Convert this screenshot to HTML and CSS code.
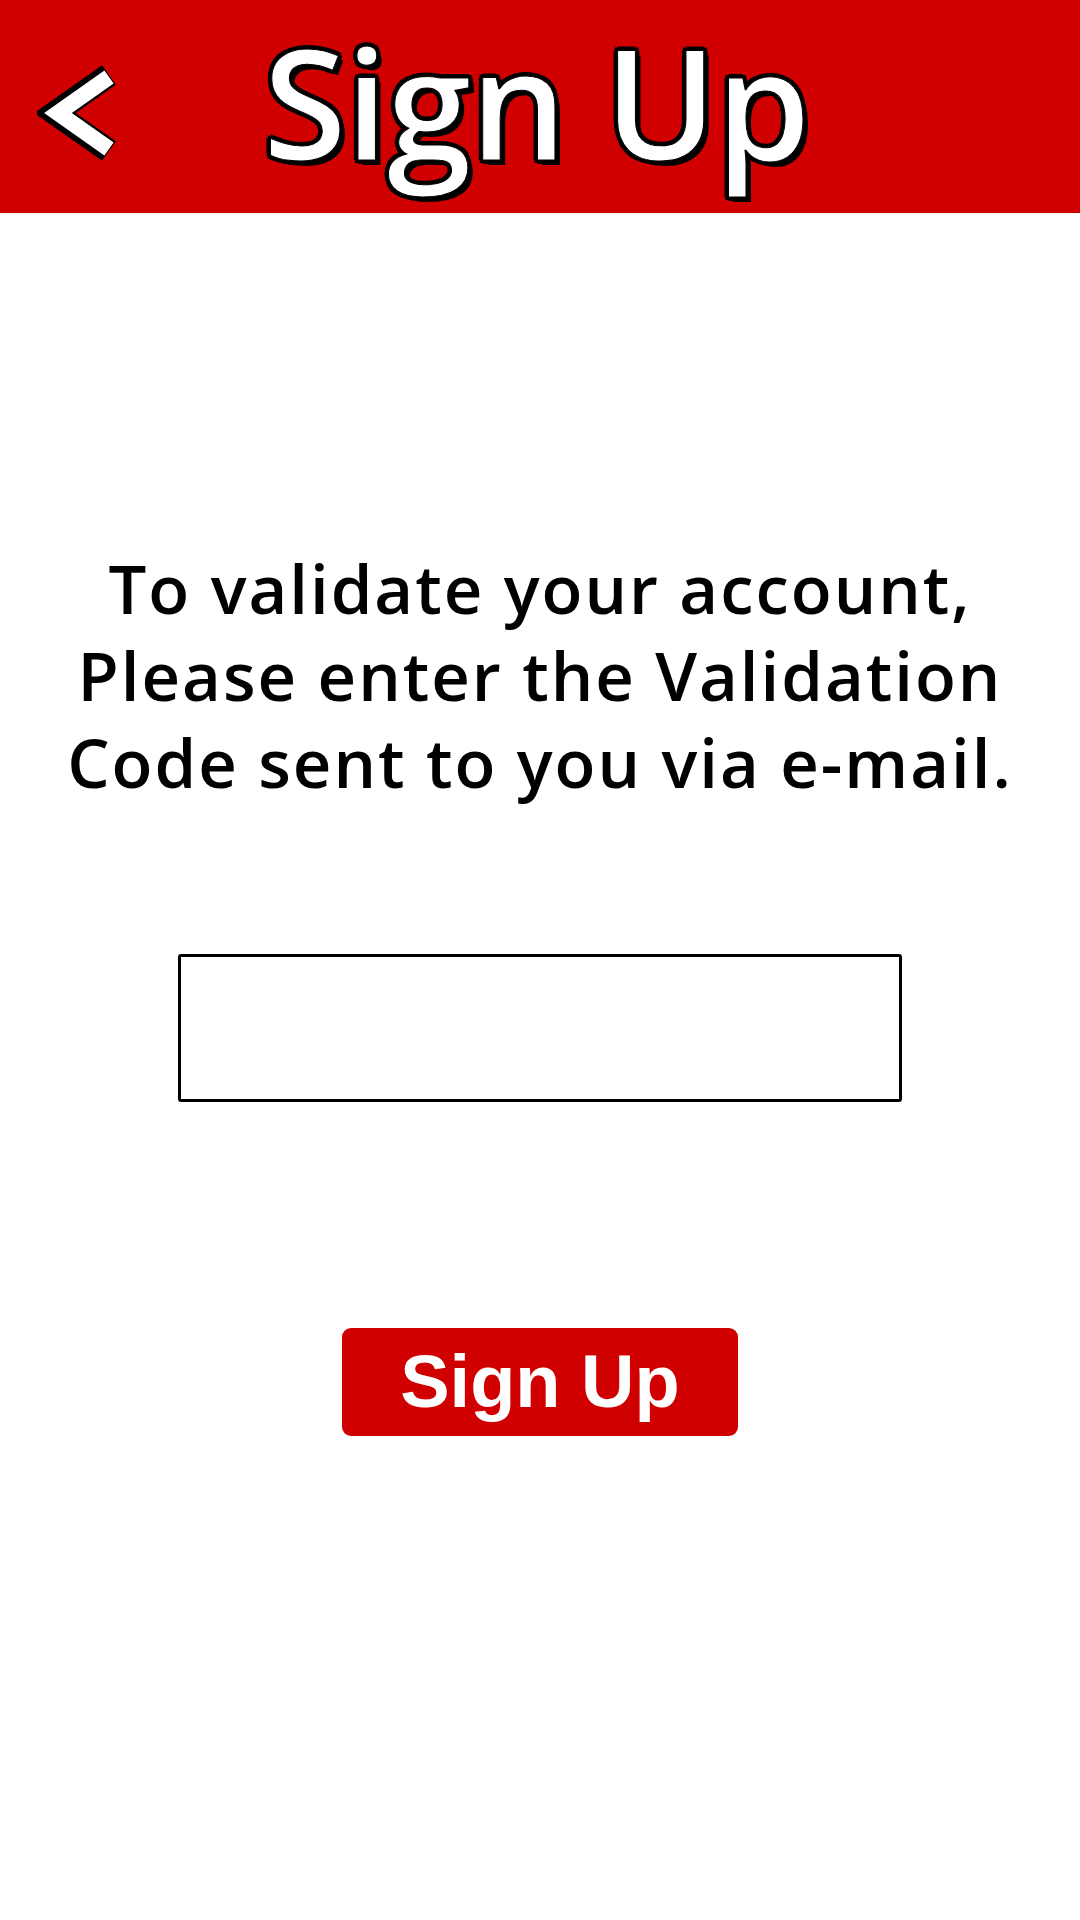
FILE: index.html
```html
<!DOCTYPE html>
<html lang="en">
<head>
<meta charset="utf-8">
<title>Sign Up</title>
<link rel="stylesheet" href="styles.css">
</head>
<body>
<header class="topbar">
  <button class="back" aria-label="Back">
    <svg width="90" height="100" viewBox="0 0 90 100">
      <polyline points="72,12 18,50 72,88" fill="none" stroke="#000" stroke-width="24" stroke-linejoin="miter" stroke-linecap="butt"/>
      <polyline points="72,14 21,50 72,86" fill="none" stroke="#fff" stroke-width="16" stroke-linejoin="miter" stroke-linecap="butt"/>
    </svg>
  </button>
  <h1 class="title">Sign Up</h1>
</header>
<main class="content">
  <p class="message">To validate your account,<br>Please enter the Validation<br>Code sent to you via e-mail.</p>
  <input class="code-input" type="text" aria-label="Validation Code">
  <button class="submit">Sign Up</button>
</main>
</body>
</html>
```

FILE: styles.css
```css
* { box-sizing: border-box; }
html, body { margin: 0; padding: 0; background: #fff; }
body { width: 1080px; height: 1920px; font-family: "Open Sans", "Noto Sans", sans-serif; }

.topbar {
  height: 213px;
  background: #d10000;
  display: flex;
  align-items: flex-start;
}
.back {
  background: none;
  border: 0;
  padding: 0;
  margin: 63px 0 0 37px;
  width: 90px;
  height: 100px;
}
.back svg { display: block; }
.title {
  margin: 26px 0 0 136px;
  font-family: "Open Sans", sans-serif;
  font-weight: 600;
  font-size: 152px;
  line-height: 1;
  color: #fff;
  letter-spacing: -1px;
  text-shadow:
    4px 0 0 #000, -4px 0 0 #000, 0 4px 0 #000, 0 -4px 0 #000,
    3px 3px 0 #000, -3px 3px 0 #000, 3px -3px 0 #000, -3px -3px 0 #000,
    5px 5px 0 #000;
  -webkit-text-stroke: 1px #000;
}

.content {
  display: flex;
  flex-direction: column;
  align-items: center;
}
.message {
  margin: 332px 0 0;
  font-size: 67px;
  font-weight: 600;
  line-height: 87px;
  text-align: center;
  color: #000;
  letter-spacing: 2px;
}
.code-input {
  margin-top: 148px;
  width: 724px;
  height: 148px;
  border: 3px solid #000;
  border-radius: 3px;
  background: #fff;
  font-size: 60px;
  outline: none;
}
.submit {
  margin-top: 226px;
  width: 396px;
  height: 108px;
  background: #d10000;
  color: #fff;
  border: 0;
  border-radius: 9px;
  font-family: "Liberation Sans", Arial, sans-serif;
  font-weight: 700;
  font-size: 74px;
  line-height: 1;
  padding: 0;
}
```
